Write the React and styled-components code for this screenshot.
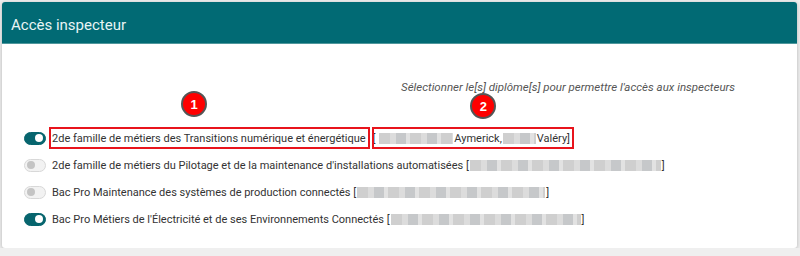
import styled, { createGlobalStyle } from "styled-components";

const GlobalStyle = createGlobalStyle`
  body {
    margin: 0;
    background: #efefef;
    font-family: Roboto, "Liberation Sans", sans-serif;
  }
`;

const rows = [
  { on: true, label: "2de famille de métiers des Transitions numérique et énergétique", marked: true },
  { on: false, label: "2de famille de métiers du Pilotage et de la maintenance d'installations automatisées", blur: 191 },
  { on: false, label: "Bac Pro Maintenance des systèmes de production connectés", blur: 188 },
  { on: true, label: "Bac Pro Métiers de l'Électricité et de ses Environnements Connectés", blur: 190 },
];

export default function App() {
  return (
    <>
      <GlobalStyle />
      <Card>
        <Header>Accès inspecteur</Header>
        <Body>
          <Hint>Sélectionner le[s] diplôme[s] pour permettre l'accès aux inspecteurs</Hint>
          <List>
            {rows.map((r, i) => (
              <Row key={i}>
                <Toggle $on={r.on} />
                {r.marked ? (
                  <>
                    <Marked>
                      {r.label}
                      <Badge $left={130} $top={-38}>1</Badge>
                    </Marked>
                    <Label>&nbsp;[</Label>
                    <Marked $gap>
                      <Blur style={{ width: 74 }} />
                      Aymerick,
                      <Blur style={{ width: 33 }} />
                      Valéry]
                      <Badge $left={96} $top={-36}>2</Badge>
                    </Marked>
                  </>
                ) : (
                  <Label>
                    {r.label} [<Blur style={{ width: r.blur }} />]
                  </Label>
                )}
              </Row>
            ))}
          </List>
        </Body>
      </Card>
    </>
  );
}

const Card = styled.div`
  margin: 2px 3px 0 2px;
  height: 246px;
  background: #fff;
  border-radius: 3px;
  box-shadow: 0 1px 4px rgba(0, 0, 0, 0.25);
  overflow: hidden;
`;

const Header = styled.div`
  height: 42px;
  box-sizing: border-box;
  padding: 4px 0 0 9px;
  background: #016a74;
  border-bottom: 1px solid #4f979c;
  color: #e8f4f4;
  font-size: 15px;
  display: flex;
  align-items: center;
`;

const Body = styled.div`
  padding: 36px 0 0 22px;
`;

const Hint = styled.div`
  font-size: 11.5px;
  font-style: italic;
  color: #555;
  padding-left: 377px;
  height: 14px;
  line-height: 14px;
`;

const List = styled.div`
  display: flex;
  flex-direction: column;
  gap: 9px;
  margin-top: 35px;
`;

const Row = styled.div`
  display: flex;
  align-items: center;
  height: 18px;
  font-size: 11px;
  color: #333;
  white-space: nowrap;
`;

const Toggle = styled.span`
  position: relative;
  width: 22px;
  height: 13px;
  border-radius: 7px;
  box-sizing: border-box;
  flex: none;
  margin-right: 6px;
  background: ${(p) => (p.$on ? "#07656e" : "#f2f2f2")};
  border: 1px solid ${(p) => (p.$on ? "#07656e" : "#d8d8d8")};
  &::after {
    content: "";
    position: absolute;
    top: 1.5px;
    left: ${(p) => (p.$on ? "10px" : "1.5px")};
    width: 8px;
    height: 8px;
    border-radius: 50%;
    background: ${(p) => (p.$on ? "#fff" : "#c4c4c4")};
  }
`;

const Label = styled.span`
  display: inline-flex;
  align-items: center;
`;

const Marked = styled.span`
  position: relative;
  display: inline-flex;
  align-items: center;
  height: 18px;
  border: 2px solid #e8141c;
  padding: 0 2px 0 ${(p) => (p.$gap ? "4px" : "1px")};
  margin-left: -3px;
`;

const Blur = styled.span`
  display: inline-block;
  height: 11px;
  margin: 0 1px;
  background: repeating-linear-gradient(
    90deg,
    #cfcfcf 0 11px,
    #dcdcdc 11px 17px,
    #c6c8ca 17px 27px,
    #e2e2e2 27px 31px
  );
  filter: blur(0.6px);
`;

const Badge = styled.span`
  position: absolute;
  left: ${(p) => p.$left}px;
  top: ${(p) => p.$top}px;
  width: 26px;
  height: 26px;
  box-sizing: border-box;
  border-radius: 50%;
  background: #f00;
  border: 2px solid #555;
  color: #fff;
  font-weight: 700;
  font-size: 13px;
  display: flex;
  align-items: center;
  justify-content: center;
  font-family: "Liberation Sans", Arial, sans-serif;
`;
